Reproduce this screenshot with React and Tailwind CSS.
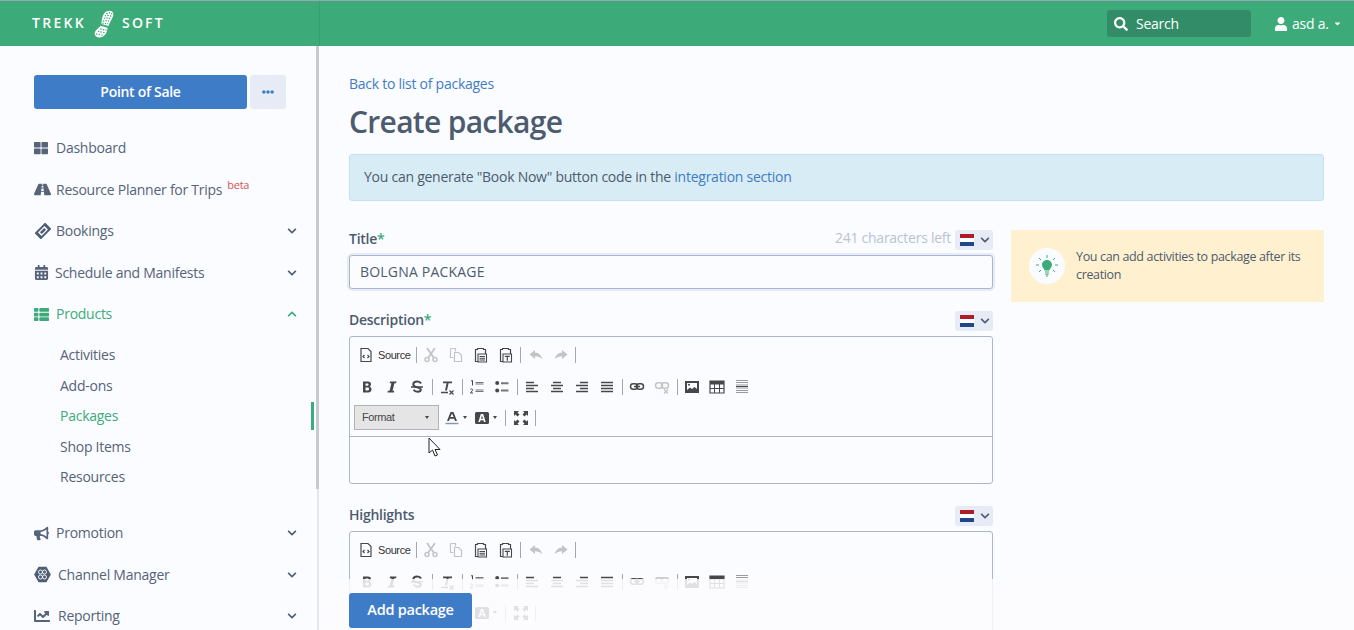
import React from "react";
import { FaThLarge, FaRoad, FaCalendarAlt, FaThList, FaBullhorn, FaChartLine, FaSearch, FaUser, FaEllipsisH, FaChevronDown, FaChevronUp, FaCaretDown } from "react-icons/fa";

const Boot = () => (
  <svg width="20" height="28" viewBox="0 0 20 28" fill="#fff">
    <path d="M10.500 3 C13 .2 18.500 -.2 19.300 3.500 C19.800 7 16 11 14.500 16 L7.500 14 C7.500 10 8 6 10.500 3Z" />
    <path d="M6.500 15.800 L13.500 17.800 C13.500 21 12 25 8.500 26.800 C5 28.300 .5 27 .7 23.500 C.9 20.500 4.500 18.500 6.500 15.800Z" />
    <g fill="#3dab79">
      <circle cx="13" cy="3.500" r=".8" /><circle cx="15.500" cy="2.700" r=".8" /><circle cx="17.700" cy="3.800" r=".7" />
      <circle cx="11.500" cy="5.800" r=".8" /><circle cx="14" cy="5.500" r=".8" /><circle cx="16.700" cy="6" r=".8" />
      <circle cx="10.500" cy="8.300" r=".8" /><circle cx="13" cy="8" r=".8" /><circle cx="15.500" cy="8.500" r=".8" />
      <circle cx="9.500" cy="11" r=".8" /><circle cx="12" cy="10.700" r=".8" /><circle cx="14.500" cy="11" r=".7" />
      <circle cx="9" cy="13.300" r=".7" /><circle cx="11.500" cy="13.500" r=".7" /><circle cx="13.700" cy="13.700" r=".6" />
      <circle cx="7" cy="19" r=".8" /><circle cx="9.500" cy="19.700" r=".8" /><circle cx="12" cy="20" r=".7" />
      <circle cx="4.500" cy="21.500" r=".8" /><circle cx="7" cy="22" r=".8" /><circle cx="9.800" cy="22.500" r=".8" />
      <circle cx="2.800" cy="24" r=".8" /><circle cx="5.300" cy="24.500" r=".8" /><circle cx="8" cy="25" r=".7" />
    </g>
  </svg>
);

const Channel = () => (
  <svg width="17" height="17" viewBox="0 0 17 17" fill="none" stroke="#4f5d73" strokeWidth="1.500">
    <path d="M5 1.500h7l4 7-4 7H5l-4-7z" fill="#4f5d73" />
    <circle cx="6.500" cy="6" r="2" stroke="#fbfcff" strokeWidth=".9" />
    <circle cx="10.500" cy="6" r="2" stroke="#fbfcff" strokeWidth=".9" />
    <circle cx="6.500" cy="11" r="2" stroke="#fbfcff" strokeWidth=".9" />
    <circle cx="10.500" cy="11" r="2" stroke="#fbfcff" strokeWidth=".9" />
  </svg>
);

const Ticket = () => (
  <svg width="16" height="16" viewBox="0 0 16 16" fill="none" className="ml-[1px]">
    <g transform="rotate(-45 8 8)">
      <rect x="0.500" y="3.500" width="15" height="9" rx="1" fill="#4f5d73" />
      <rect x="3.500" y="5.500" width="9" height="5" fill="#fbfcff" />
      <rect x="5" y="6.700" width="6" height="2.600" fill="#4f5d73" />
    </g>
  </svg>
);

function NavItem({ icon, label, gap = "w-[22px]", chevron, active, sup }) {
  return (
    <div className={`flex h-[41.5px] items-center pl-[34px] pr-[22px] text-sm ${active ? "text-[#3dab79]" : "text-[#566378]"}`}>
      <span className={`flex shrink-0 items-center ${gap}`}>{icon}</span>
      <span>{label}</span>
      {sup && <sup className="ml-[5px] mt-[1px] text-[11px] text-[#d9534f]">{sup}</sup>}
      {chevron === "down" && <FaChevronDown className="ml-auto mr-[-4px] text-[10px] text-[#4f5d73]" />}
      {chevron === "up" && <FaChevronUp className="ml-auto mr-[-4px] text-[10px] text-[#3dab79]" />}
    </div>
  );
}

function SubItem({ label, active }) {
  return (
    <div className={`relative flex h-[30.5px] items-center pl-[60px] text-sm ${active ? "text-[#3dab79]" : "text-[#566378]"}`}>
      {label}
      {active && <span className="absolute right-[1px] top-[1px] h-[28px] w-[3px] bg-[#3dab79]" />}
    </div>
  );
}

function Sidebar() {
  return (
    <aside className="flex h-full w-[319px] shrink-0 overflow-hidden">
      <div className="w-[315px] shrink-0">
        <div className="mt-[29px] flex pl-[34px]">
          <button className="h-[34px] w-[213px] rounded-[3px] bg-[#3f7cc8] text-sm font-semibold tracking-[-0.3px] text-white">Point of Sale</button>
          <button className="ml-[3px] flex h-[34px] w-[36px] items-center justify-center rounded-[3px] bg-[#e6ebf5] text-[#3f7cc8]"><FaEllipsisH className="text-[12px]" /></button>
        </div>
        <div className="mt-[18.300px]">
          <NavItem icon={<FaThLarge className="text-[14px]" />} label="Dashboard" />
          <NavItem icon={<FaRoad className="text-[17px]" />} label="Resource Planner for Trips" sup="beta" />
          <NavItem icon={<Ticket />} label="Bookings" chevron="down" />
          <NavItem icon={<FaCalendarAlt className="text-[15px]" />} label="Schedule and Manifests" gap="w-[21px]" chevron="down" />
          <NavItem icon={<FaThList className="text-[15px]" />} label="Products" chevron="up" active />
          <div className="pt-[5px]">
            <SubItem label="Activities" />
            <SubItem label="Add-ons" />
            <SubItem label="Packages" active />
            <SubItem label="Shop Items" />
            <SubItem label="Resources" />
          </div>
          <div className="h-[20px]" />
          <NavItem icon={<FaBullhorn className="text-[15px]" />} label="Promotion" chevron="down" />
          <NavItem icon={<Channel />} label="Channel Manager" gap="w-[24px]" chevron="down" />
          <NavItem icon={<FaChartLine className="text-[16px]" />} label="Reporting" gap="w-[24px]" chevron="down" />
        </div>
      </div>
      <div className="flex w-[4px] shrink-0 flex-col">
        <div className="ml-[1px] h-[443px] w-[3px] bg-[#c9cacd]" />
        <div className="ml-[2px] flex-1 bg-[#e6e7ea]" />
      </div>
    </aside>
  );
}

function Flag() {
  return (
    <button className="flex h-[20px] w-[38px] shrink-0 items-center rounded-[3px] bg-[#e6ebf5] pl-[5px]">
      <span className="flex h-[12px] w-[14px] flex-col">
        <span className="h-[4px] bg-[#ae1c28]" />
        <span className="h-[4px] bg-white" />
        <span className="h-[4px] bg-[#21468b]" />
      </span>
      <FaChevronDown className="ml-[6px] text-[10px] text-[#4f5d73]" />
    </button>
  );
}

const D = "#474747";
const L = "#c4c4c4";
const Ic = ({ children, size = 16 }) => <svg width={size} height={size} viewBox="0 0 16 16">{children}</svg>;

const icons = {
  source: <Ic><path d="M3 1.500h7l3 3v10H3z" fill="none" stroke={D} strokeWidth="1.200" /><path d="M6.500 8 5 9.500 6.500 11M9.500 8 11 9.500 9.500 11" fill="none" stroke={D} strokeWidth="1.200" /></Ic>,
  cut: <Ic><path d="M4 1l7 10M12 1 5 11" stroke={L} strokeWidth="1.800" fill="none" /><circle cx="4" cy="12.500" r="2" fill="none" stroke={L} strokeWidth="1.500" /><circle cx="12" cy="12.500" r="2" fill="none" stroke={L} strokeWidth="1.500" /></Ic>,
  copy: <Ic><path d="M2.500 1.500h5v3M6.500 5.500h4l3 3v6h-7z" fill="none" stroke={L} strokeWidth="1.200" /><path d="M2.500 1.500v9h3" fill="none" stroke={L} strokeWidth="1.200" /></Ic>,
  paste: <Ic><path d="M2.500 2.500h2v-1h6v1h2V14.500h-10z" fill="none" stroke={D} strokeWidth="1.200" /><path d="M5 7h8.500v8H5z" fill="#fbfcff" stroke={D} strokeWidth="1.100" /><path d="M6.500 9.500h5.500M6.500 11.300h5.500M6.500 13h5.500" stroke={D} /></Ic>,
  pasteT: <Ic><path d="M2.500 2.500h2v-1h6v1h2V14.500h-10z" fill="none" stroke={D} strokeWidth="1.200" /><path d="M5 7h8.500v8H5z" fill="#fbfcff" stroke={D} strokeWidth="1.100" /><path d="M6.800 9.300h5M9.300 9.300v4.500" stroke={D} strokeWidth="1.200" /></Ic>,
  undo: <Ic><path d="M7 3 1.500 7.500 7 12V9.300c3 0 5 .7 7 3-.5-4-3-6.500-7-6.800z" fill={L} /></Ic>,
  redo: <Ic><path d="M9 3l5.500 4.500L9 12V9.300c-3 0-5 .7-7 3 .5-4 3-6.500 7-6.800z" fill={L} /></Ic>,
  b: <Ic><path d="M4 2.500h5c2 0 3 1 3 2.700 0 1.200-.7 2-1.700 2.300 1.400.3 2.200 1.200 2.200 2.700 0 2-1.300 3.300-3.400 3.300H4zm2.500 2v2.200h2c.7 0 1.100-.4 1.100-1.100s-.4-1.100-1.100-1.100zm0 4.100v2.900h2.300c.9 0 1.300-.5 1.300-1.400 0-1-.5-1.500-1.400-1.500z" fill={D} /></Ic>,
  i: <Ic><path d="M6 2.500h6.500l-.4 1.800H10.400L8.600 11.700h1.700l-.4 1.800H3.500l.4-1.800h1.700l1.800-7.400H5.700z" fill={D} /></Ic>,
  s: <Ic><path d="M12 4.500C11.300 3 10 2.500 8.200 2.500 5.800 2.500 4.300 3.700 4.300 5.500c0 3.800 7.500 2 7.500 5.300 0 1.300-1.300 2-3.200 2-1.800 0-3.200-.7-4-2.200" fill="none" stroke={D} strokeWidth="2" /><path d="M2 8h12" stroke={D} strokeWidth="1.400" /></Ic>,
  tx: <Ic><path d="M4 2.500h9v1.800H9.600L8 11.500H6l1.600-7.200H4z" fill={D} /><path d="M2 13.500h7" stroke={D} strokeWidth="1.300" /><path d="M10.500 11.500l4 4M14.500 11.500l-4 4" stroke={D} strokeWidth="1.200" /></Ic>,
  ol: <Ic><path d="M6.500 3.500h8M6.500 5h8M6.500 11h8M6.500 12.500h8" stroke="#777" /><path d="M2 2l1.500-.5v5M1.500 10.500c1-1 2.500-.5 2 .8L1.500 14h2.500" fill="none" stroke={D} /></Ic>,
  ul: <Ic><circle cx="3.200" cy="4" r="2" fill={D} /><circle cx="3.200" cy="11.500" r="2" fill={D} /><path d="M7 3.200h7.500v2H7zM7 10.500h7.500v2H7z" fill="#777" /></Ic>,
  left: <Ic><path d="M2 2.500h8M2 5.500h12M2 8.500h8M2 11.500h12" stroke={D} strokeWidth="1.500" transform="translate(0 1)" /></Ic>,
  center: <Ic><path d="M4 2.500h8M2 5.500h12M4 8.500h8M2 11.500h12" stroke={D} strokeWidth="1.500" transform="translate(0 1)" /></Ic>,
  right: <Ic><path d="M6 2.500h8M2 5.500h12M6 8.500h8M2 11.500h12" stroke={D} strokeWidth="1.500" transform="translate(0 1)" /></Ic>,
  justify: <Ic><path d="M2 2.500h12M2 5.500h12M2 8.500h12M2 11.500h12" stroke={D} strokeWidth="1.500" transform="translate(0 1)" /></Ic>,
  link: <Ic><rect x="1.500" y="4.800" width="7" height="5.400" rx="2.700" fill="none" stroke={D} strokeWidth="1.500" /><rect x="7.500" y="4.800" width="7" height="5.400" rx="2.700" fill="none" stroke={D} strokeWidth="1.500" /><path d="M5 7.500h6" stroke={D} strokeWidth="1.500" /></Ic>,
  unlink: <Ic><rect x="1.500" y="3.800" width="7" height="5.400" rx="2.700" fill="none" stroke={L} strokeWidth="1.500" /><rect x="7.500" y="3.800" width="7" height="5.400" rx="2.700" fill="none" stroke={L} strokeWidth="1.500" /><path d="M10 10.500l4 4M14 10.500l-4 4" stroke={L} strokeWidth="1.400" /></Ic>,
  image: <Ic><rect x="1.500" y="2.500" width="13" height="11" fill="none" stroke={D} /><rect x="2" y="3" width="12" height="10" fill={D} /><path d="M3 4h10v6l-2.500-2L8 10 6 8.500 3 11z" fill="#fbfcff" /><circle cx="5" cy="5.800" r="1" fill={D} /></Ic>,
  table: <Ic><path d="M1 2h14v12H1z" fill="none" stroke={D} strokeWidth="1.200" /><path d="M1 2h14v3.500H1z" fill={D} /><path d="M5.500 5v9M10.500 5v9M1 9.500h14" stroke={D} /></Ic>,
  hr: <Ic><path d="M2 1.500h12M2 3.500h12M2 11.500h12M2 13.500h12" stroke="#9a9a9a" /><path d="M2 7.500h12" stroke={D} strokeWidth="1.600" /><path d="M2 5.500h12M2 9.500h12" stroke="#c9c9c9" /></Ic>,
  color: <Ic><path d="M5.500 2h3l3.500 9h-2l-.8-2.200H4.800L4 11H2zM5.400 7.100h3.200L7 3.500z" fill={D} transform="translate(1 0)" /><path d="M1.500 13.500h13" stroke="#8b97ad" strokeWidth="1.600" /></Ic>,
  bg: <Ic><rect x="1" y="2" width="14" height="12" rx="1.500" fill={D} /><path d="M6.800 4h2.400l2.500 8h-1.800l-.5-1.800H6.600L6 12H4.300zM7 8.700h2L8 5.500z" fill="#fbfcff" /></Ic>,
  max: <Ic><path d="M1 1h5L4.500 2.500 6.500 4.500 4.500 6.500 2.500 4.500 1 6zM15 1v5l-1.500-1.500-2 2-2-2 2-2L10 1zM1 15v-5l1.500 1.500 2-2 2 2-2 2L6 15zM15 15h-5l1.500-1.500-2-2 2-2 2 2L15 10z" fill={D} /></Ic>,
};

const Sep = ({ cls = "mx-[2px]" }) => <span className={`h-[16px] w-px shrink-0 bg-[#a6a6a6] ${cls}`} />;
const Btn = ({ name }) => <span className="flex h-[16px] w-[25px] shrink-0 items-center justify-center">{icons[name]}</span>;
const Caret = () => <span className="ml-[3px] h-0 w-0 border-x-[2.500px] border-t-[3px] border-x-transparent border-t-[#474747]" />;

function Editor({ cls = "h-[148px]" }) {
  return (
    <div className={`w-[644px] shrink-0 overflow-hidden rounded-[3px] border border-[#aab6cf] ${cls}`}>
      <div className="h-[100px] border-b border-[#aab6cf] pl-[4px] pt-[10px] font-['Liberation_Sans',sans-serif]">
        <div className="flex h-[16px] items-center">
          <span className="flex w-[60px] shrink-0 items-center pl-[4px]">{icons.source}<span className="ml-[4px] text-[11px] tracking-[-0.4px] text-[#333]">Source</span></span>
          <Sep cls="mx-[1.500px]" />
          <Btn name="cut" /><Btn name="copy" /><Btn name="paste" /><Btn name="pasteT" />
          <Sep /><Btn name="undo" /><Btn name="redo" /><Sep />
        </div>
        <div className="mt-[16px] flex h-[16px] items-center pl-[0.500px]">
          <Btn name="b" /><Btn name="i" /><Btn name="s" /><Sep />
          <Btn name="tx" /><Sep />
          <Btn name="ol" /><Btn name="ul" /><Sep />
          <Btn name="left" /><Btn name="center" /><Btn name="right" /><Btn name="justify" /><Sep />
          <Btn name="link" /><Btn name="unlink" /><Sep />
          <Btn name="image" /><Btn name="table" /><Btn name="hr" />
        </div>
        <div className="mt-[10px] flex h-[25px] items-center">
          <span className="flex h-[25px] w-[85px] shrink-0 items-center justify-between border border-[#b2b2b2] bg-[#e5e5e5] pl-[7px] pr-[9px] text-[11px] tracking-[-0.4px] text-[#474747]">Format<span className="h-0 w-0 border-x-[2.500px] border-t-[3px] border-x-transparent border-t-[#474747]" /></span>
          <span className="ml-[5px] flex w-[30px] shrink-0 items-center">{icons.color}<Caret /></span>
          <span className="flex w-[29px] shrink-0 items-center">{icons.bg}<Caret /></span>
          <Sep /><Btn name="max" /><Sep />
        </div>
      </div>
    </div>
  );
}

const Label = ({ children }) => <label className="-mt-[2px] text-sm font-semibold text-[#4d5b6e]">{children}</label>;

function Main() {
  return (
    <main className="relative h-full flex-1 overflow-hidden pl-[30px] pr-[30px]">
      <a className="mt-[28px] block h-[20px] text-sm leading-[20px] text-[#3f7cc8]">Back to list of packages</a>
      <h1 className="mt-[6px] h-[44px] text-[30px] font-semibold leading-[44px] tracking-[-0.7px] text-[#4d5b6e]">Create package</h1>
      <div className="mt-[10px] flex h-[47px] items-center rounded-[3px] border border-[#c3e2ee] bg-[#d8ecf5] px-[14px] pb-[2px] text-sm text-[#4d5b6e]">
        You can generate "Book Now" button code in the&nbsp;<a className="text-[#3f7cc8]">integration section</a>
      </div>
      <div className="mt-[29px] flex items-start">
        <div className="w-[644px] shrink-0">
          <div className="flex h-[20px] items-center justify-between">
            <Label>Title<span className="text-[#3dab79]">*</span></Label>
            <div className="flex items-center">
              <span className="mr-[4px] -mt-[4px] text-sm text-[#b9c3d3]">241 characters left</span>
              <Flag />
            </div>
          </div>
          <input readOnly value="BOLGNA PACKAGE" className="mt-[5px] block h-[34px] w-full rounded-[3px] border border-[#aab6cf] bg-[#fbfcff] px-[10px] pb-[2px] text-sm tracking-[.2px] text-[#4d5b6e] shadow-[0_0_0_2px_#e6ebf5] outline-none" />
          <div className="mt-[22px] flex h-[20px] items-center justify-between">
            <Label>Description<span className="text-[#3dab79]">*</span></Label>
            <Flag />
          </div>
          <div className="mt-[5px]"><Editor /></div>
          <div className="mt-[22px] flex h-[20px] items-center justify-between">
            <Label>Highlights</Label>
            <Flag />
          </div>
          <div className="mt-[5px]"><Editor /></div>
        </div>
        <div className="ml-[18px] flex h-[72px] flex-1 items-center bg-[#fff1cf] pl-[18px] pr-[16px]">
          <span className="flex h-[36px] w-[36px] shrink-0 items-center justify-center rounded-full bg-[#fbfcff]">
            <svg width="22" height="24" viewBox="0 0 22 24">
              <path d="M11 6c-3 0-5 2.200-5 4.800 0 2.500 2 3.500 2.700 5.700h4.600c.7-2.200 2.700-3.200 2.700-5.700C16 8.200 14 6 11 6z" fill="#3dab79" />
              <path d="M9 17.500h4v1H9zM9.300 19.500h3.400v1.200H9.300zM10 21.500h2v1h-2z" fill="#3dab79" />
              <path d="M11 1v3M3 4l2 2M19 4l-2 2M0 11h3M19 11h3M3 18l2-2M19 18l-2-2" stroke="#3dab79" strokeWidth="1" />
            </svg>
          </span>
          <p className="ml-[11px] text-[12.500px] leading-[18px] tracking-[-0.35px] text-[#4d5b6e]">You can add activities to package after its creation</p>
        </div>
      </div>
      <div className="absolute bottom-0 left-0 right-0 flex h-[51px] items-start bg-[#fbfcff]/85 pl-[30px] pt-[14px]">
        <button className="h-[35px] w-[123px] rounded-[3px] bg-[#3f7cc8] pb-[2px] text-[14.500px] font-semibold text-white">Add package</button>
      </div>
    </main>
  );
}

export default function App() {
  return (
    <div className="h-[630px] w-full overflow-hidden bg-[#fbfcff] font-['Open_Sans',sans-serif] tracking-[-0.016em]">
      <header className="flex h-[46px] items-center border-t border-[#9aa5b8] bg-[#3dab79] text-white">
        <div className="flex h-full w-[320px] shrink-0 items-center border-r border-[#37a06f] pl-[32px]">
          <span className="w-[62px] pb-[2px] text-[14px] font-semibold tracking-[2.300px]">TREKK</span>
          <Boot />
          <span className="ml-[8px] pb-[2px] text-[14px] font-semibold tracking-[2.200px]">SOFT</span>
        </div>
        <div className="ml-auto flex h-[27px] w-[144px] items-center rounded-[3px] bg-[#338c68] pl-[7px] text-sm">
          <FaSearch className="text-[14px]" />
          <span className="ml-[8px]">Search</span>
        </div>
        <div className="ml-[23px] flex w-[80px] items-center text-sm">
          <FaUser className="text-[14px]" />
          <span className="ml-[4px]">asd a.</span>
          <FaCaretDown className="ml-[4px] text-[9px]" />
        </div>
      </header>
      <div className="relative flex h-[584px]">
        <Sidebar />
        <Main />
        <svg className="pointer-events-none absolute left-[428px] top-[391px]" width="14" height="20" viewBox="0 0 14 20">
          <path d="M1 1v15l3.500-3 2.500 6 2.500-1-2.500-5.500H12z" fill="#fff" stroke="#222" strokeWidth="1" />
        </svg>
      </div>
    </div>
  );
}
